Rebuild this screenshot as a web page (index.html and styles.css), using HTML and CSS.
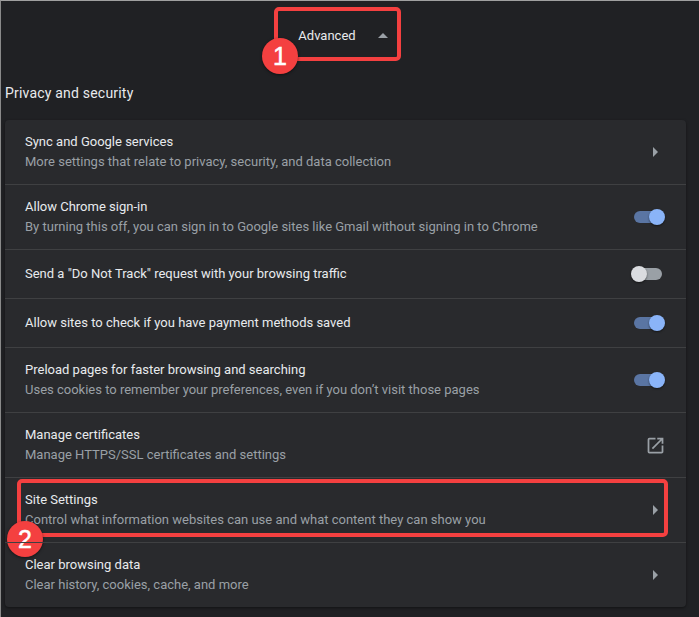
FILE: index.html
```html
<!DOCTYPE html>
<html lang="en">
<head>
<meta charset="utf-8">
<title>Settings</title>
<link rel="stylesheet" href="styles.css">
</head>
<body>
<div class="page">
  <div class="advanced">
    <span class="advanced-label">Advanced</span>
    <svg class="caret-up" width="10" height="5" viewBox="0 0 10 5"><path d="M0 5 L5 0 L10 5 Z"/></svg>
    <span class="mark mark-adv"></span>
    <span class="badge badge-1">1</span>
  </div>
  <h2 class="section-title">Privacy and security</h2>
  <div class="card">
    <div class="row row-tall">
      <div class="text"><div class="title">Sync and Google services</div><div class="sub">More settings that relate to privacy, security, and data collection</div></div>
      <svg class="arrow" width="5" height="10" viewBox="0 0 5 10"><path d="M0 0 L5 5 L0 10 Z"/></svg>
    </div>
    <div class="row row-tall">
      <div class="text"><div class="title">Allow Chrome sign-in</div><div class="sub">By turning this off, you can sign in to Google sites like Gmail without signing in to Chrome</div></div>
      <span class="toggle on"><span class="knob"></span></span>
    </div>
    <div class="row row-short">
      <div class="text"><div class="title">Send a "Do Not Track" request with your browsing traffic</div></div>
      <span class="toggle"><span class="knob"></span></span>
    </div>
    <div class="row row-short">
      <div class="text"><div class="title">Allow sites to check if you have payment methods saved</div></div>
      <span class="toggle on"><span class="knob"></span></span>
    </div>
    <div class="row row-tall">
      <div class="text"><div class="title">Preload pages for faster browsing and searching</div><div class="sub">Uses cookies to remember your preferences, even if you don’t visit those pages</div></div>
      <span class="toggle on"><span class="knob"></span></span>
    </div>
    <div class="row row-tall">
      <div class="text"><div class="title">Manage certificates</div><div class="sub">Manage HTTPS/SSL certificates and settings</div></div>
      <svg class="external" width="21" height="21" viewBox="0 0 24 24"><path d="M19 19H5V5h7V3H5a2 2 0 0 0-2 2v14a2 2 0 0 0 2 2h14c1.1 0 2-.9 2-2v-7h-2v7zM14 3v2h3.59l-9.83 9.83 1.41 1.41L19 6.41V10h2V3h-7z"/></svg>
    </div>
    <div class="row row-tall">
      <div class="text"><div class="title">Site Settings</div><div class="sub">Control what information websites can use and what content they can show you</div></div>
      <svg class="arrow" width="5" height="10" viewBox="0 0 5 10"><path d="M0 0 L5 5 L0 10 Z"/></svg>
      <span class="mark mark-site"></span>
      <span class="badge badge-2">2</span>
    </div>
    <div class="row row-tall">
      <div class="text"><div class="title">Clear browsing data</div><div class="sub">Clear history, cookies, cache, and more</div></div>
      <svg class="arrow" width="5" height="10" viewBox="0 0 5 10"><path d="M0 0 L5 5 L0 10 Z"/></svg>
    </div>
  </div>
</div>
</body>
</html>
```
FILE: styles.css
```css
html, body { margin: 0; padding: 0; }
body {
  width: 699px;
  height: 617px;
  overflow: hidden;
  background: #202124;
  font-family: Roboto, "Liberation Sans", sans-serif;
}
.page {
  box-sizing: border-box;
  width: 699px;
  height: 617px;
  border-top: 1px solid #a0a0a0;
  border-left: 1px solid #8a8a8a;
  padding: 0 13px 0 4px;
  overflow: hidden;
}
.advanced {
  position: relative;
  display: flex;
  align-items: center;
  justify-content: center;
  gap: 22px;
  height: 68px;
  margin-left: 1px;
  padding-right: 6px;
  color: #e8eaed;
  font-size: 13px;
  font-weight: 450;
}
.caret-up { fill: #9aa0a6; }
.section-title {
  margin: 0;
  height: 51px;
  color: #e8eaed;
  font-size: 14px;
  font-weight: 450;
  line-height: 48px;
  letter-spacing: 0.2px;
}
.card {
  background: #292a2d;
  border-radius: 4px;
  box-shadow: 0 1px 3px rgba(0, 0, 0, 0.45);
}
.row {
  position: relative;
  box-sizing: border-box;
  display: flex;
  align-items: center;
  justify-content: space-between;
  padding: 0 23px 0 20px;
  border-top: 1px solid #3f4042;
}
.row:first-child { border-top: 0; }
.row-tall { height: 65px; }
.row:first-child.row-tall { height: 64px; }
.row-short { height: 49px; }
.title {
  color: #e8eaed;
  font-size: 13px;
  font-weight: 450;
  line-height: 20px;
}
.sub {
  color: #9aa0a6;
  font-size: 13px;
  line-height: 20px;
}
.arrow { fill: #9aa0a6; margin-right: 5px; }
.external { fill: #9aa0a6; margin-right: -3px; }
.toggle {
  position: relative;
  display: block;
  width: 28px;
  height: 12px;
  border-radius: 6px;
  background: #9aa0a6;
  margin-right: 1px;
}
.toggle .knob {
  position: absolute;
  left: -3px;
  top: -2px;
  width: 16px;
  height: 16px;
  border-radius: 50%;
  background: #dadce0;
  box-shadow: 0 1px 2px rgba(0, 0, 0, 0.5);
}
.toggle.on { background: #5a75a3; }
.toggle.on .knob { left: 15px; background: #8ab4f8; }
.mark {
  position: absolute;
  box-sizing: border-box;
  border: 4px solid #f44040;
  border-radius: 5px;
  pointer-events: none;
}
.mark-adv { left: 268px; top: 6px; width: 127px; height: 54px; }
.mark-site { left: 12px; top: 1px; width: 651px; height: 58px; }
.badge {
  position: absolute;
  width: 36px;
  height: 36px;
  border-radius: 50%;
  background: #f44040;
  color: #fff;
  font-family: "Liberation Sans", sans-serif;
  font-size: 25px;
  line-height: 36px;
  text-align: center;
  -webkit-text-stroke: 0.5px #fff;
  box-shadow: 0 1px 3px rgba(0, 0, 0, 0.5);
}
.badge-1 { left: 256px; top: 37px; }
.badge-2 { left: 2px; top: 43px; }
```
